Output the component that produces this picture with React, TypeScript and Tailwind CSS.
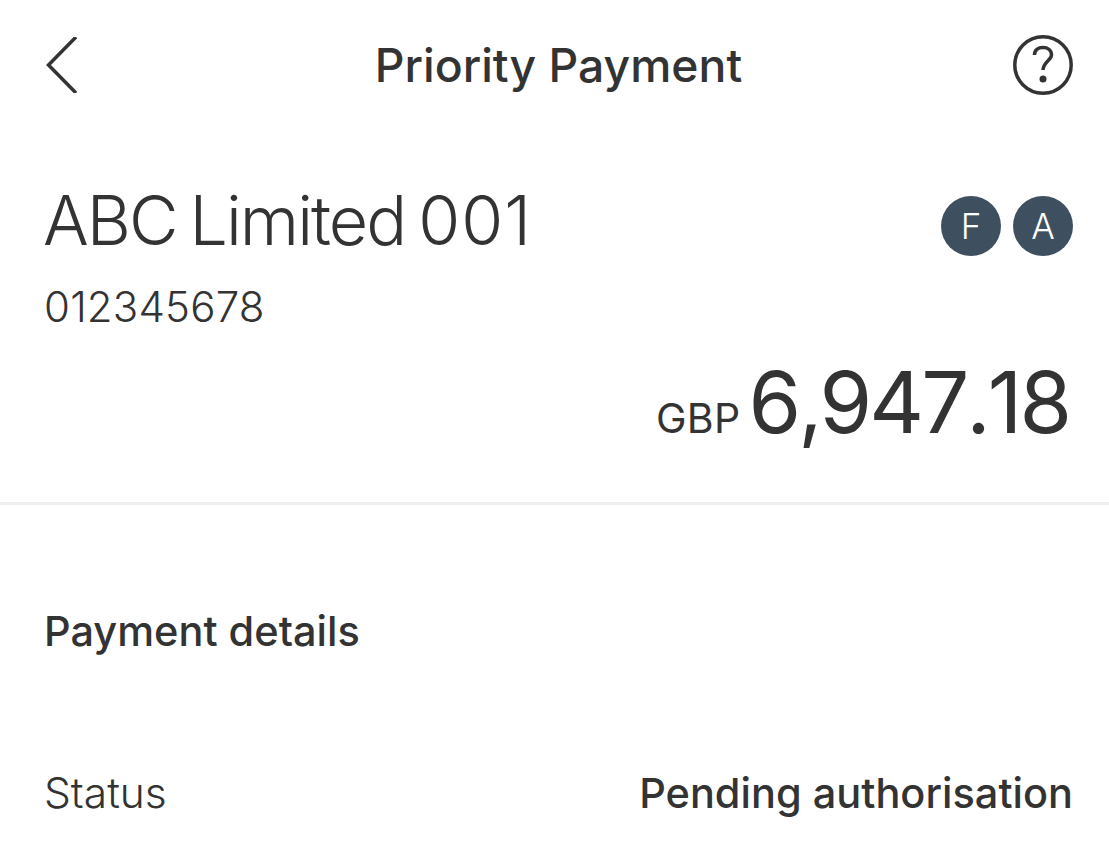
function Badge({ letter }: { letter: string }) {
  return (
    <div className="flex h-[60px] w-[60px] items-center justify-center rounded-full bg-[#3e5060] text-[35px] font-light text-white">
      {letter}
    </div>
  )
}

export default function App() {
  return (
    <div className="h-[863px] w-[1109px] overflow-hidden bg-white font-['Inter',sans-serif] text-[#333333]">
      {/* Header */}
      <div className="flex h-[130px] items-center justify-between pl-[43px] pr-[36px]">
        <div className="w-[61px] pl-[2px]">
          <svg width="34" height="56" viewBox="0 0 34 56" fill="none" stroke="#333333" strokeWidth="3.5">
            <path d="M31 0 L3.5 28 L31 56" />
          </svg>
        </div>
        <h1 className="mt-[2px] text-[46.3px] font-medium">Priority Payment</h1>
        <svg width="60" height="60" viewBox="0 0 60 60" fill="none" stroke="#333333" strokeWidth="3.5">
          <circle cx="30" cy="30" r="28.2" />
          <path d="M21.5 20 C21.5 15 25 12.5 30 12.5 C35 12.5 38.5 15.5 38.5 20 C38.5 25 30 27 30 35" />
          <circle cx="30" cy="44" r="3.5" fill="#333333" stroke="none" />
        </svg>
      </div>

      {/* Account */}
      <div className="border-b-[3px] border-[#eeeeee] pb-[49px] pl-[43px] pr-[36px] pt-[50px]">
        <div className="flex items-start justify-between">
          <div>
            <div className="text-[68px] font-light leading-[80px] tracking-[-2px] [word-spacing:-4px]">
              ABC Limited <span className="tracking-[1px]">001</span>
            </div>
            <div className="ml-px mt-[23px] text-[42px] font-light leading-[48px] tracking-[0.2px]">012345678</div>
          </div>
          <div className="mt-[16px] flex gap-[12px]">
            <Badge letter="F" />
            <Badge letter="A" />
          </div>
        </div>
        <div className="mt-[22px] flex items-baseline justify-end gap-[8px] pr-[4px]">
          <span className="text-[41px] tracking-[0.3px]">GBP</span>
          <span className="text-[85px] leading-[100px] tracking-[-3px] [font-kerning:none]">6,947.18</span>
        </div>
      </div>

      {/* Details */}
      <div className="pl-[44px] pr-[36px]">
        <h2 className="mt-[101px] text-[41.5px] font-medium leading-[50px]">Payment details</h2>
        <div className="mt-[112px] flex items-center justify-between">
          <span className="text-[42.5px] font-light leading-[50px]">Status</span>
          <span className="text-[41.5px] font-medium leading-[50px]">Pending authorisation</span>
        </div>
      </div>
    </div>
  )
}
